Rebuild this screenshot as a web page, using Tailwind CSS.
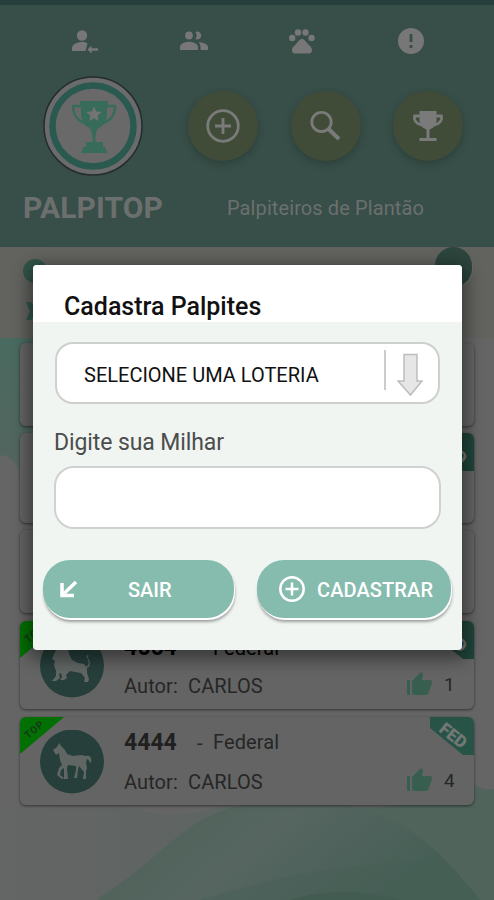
<!DOCTYPE html>
<html lang="pt-BR">
<head>
  <meta charset="UTF-8" />
  <meta name="viewport" content="width=device-width, initial-scale=1.0" />
  <title>Palpitop – Cadastra Palpites</title>
  <script src="https://cdn.jsdelivr.net/npm/@tailwindcss/browser@4"></script>
</head>
<body class="relative w-[494px] h-[900px] overflow-hidden bg-[#656565] font-['Roboto',sans-serif]">

  <!-- Background waves -->
  <svg class="absolute inset-0 w-[494px] h-[900px]" viewBox="0 0 494 900">
    <defs>
      <linearGradient id="side" x1="0" y1="0" x2="0" y2="1">
        <stop offset="0" stop-color="#486a5f" />
        <stop offset="0.2" stop-color="#4c6960" />
        <stop offset="1" stop-color="#53655e" />
      </linearGradient>
      <linearGradient id="hill" x1="0" y1="0" x2="1" y2="0.3">
        <stop offset="0" stop-color="#4c6157" />
        <stop offset="0.5" stop-color="#566560" />
        <stop offset="1" stop-color="#455f55" />
      </linearGradient>
      <linearGradient id="soft" x1="0" y1="0" x2="1" y2="0">
        <stop offset="0" stop-color="#646565" />
        <stop offset="1" stop-color="#56645f" />
      </linearGradient>
    </defs>
    <path d="M0 338H60V478H20C18 462 10 456 0 455Z" fill="url(#side)" />
    <path d="M0 806H130Q170 824 220 806H494V900H0Z" fill="url(#soft)" />
    <path d="M360 808C420 812 440 770 474 784Q486 792 494 789V900H420Z" fill="#50645b" />
    <path d="M98 898C160 862 185 812 250 804H340C405 814 440 850 480 900H98Z" fill="url(#hill)" />
    <path d="M200 900C270 880 330 862 440 862Q465 880 480 900Z" fill="#455f54" opacity="0.4" />
    <path d="M290 900Q340 884 400 900Z" fill="#435c52" />
  </svg>

  <!-- Header -->
  <header class="relative h-[247px] bg-[#384e48] border-t-[5px] border-[#263f3c]">
    <nav class="grid grid-cols-4 pl-[30.5px] pr-[28.5px] pt-[22px] justify-items-center text-[#777777]">
      <svg class="w-7 h-7" viewBox="0 0 28 28" fill="currentColor">
        <circle cx="11" cy="8.500" r="5.200" />
        <path d="M1 24v-3c0-4 6-6 10-6 2.500 0 4 .5 5.500 1.300L14.500 24Z" />
        <path d="M16.500 22.500l4-4v2.800H27v2.400h-6.500v2.800Z" />
      </svg>
      <svg class="w-7 h-7" viewBox="0 0 28 28" fill="currentColor">
        <circle cx="9" cy="8.500" r="3.900" />
        <path d="M15.500 5.100a3.900 3.900 0 1 1 0 6.800 6 6 0 0 0 0-6.800Z" />
        <path d="M0 23v-3c0-3.300 5.500-5.200 9-5.200s9 1.900 9 5.200v3Z" />
        <path d="M18.500 14.900c4 .4 9.500 2 9.500 5.100v3h-7.500v-3c0-2-.8-3.800-2-5.100Z" />
      </svg>
      <svg class="w-7 h-7" viewBox="0 0 28 28" fill="currentColor">
        <circle cx="4.200" cy="11" r="3.200" />
        <circle cx="10" cy="5.500" r="3.200" />
        <circle cx="17.500" cy="5.500" r="3.200" />
        <circle cx="23.500" cy="11" r="3.200" />
        <path d="M14 12c-2 0-3.500 2-5 4-2 2.300-5 4-5 7s2 3.500 4.500 3.500h11c2.500 0 4.500-.5 4.500-3.500s-3-4.700-5-7c-1.500-2-3-4-5-4Z" />
      </svg>
      <svg class="w-7 h-7" viewBox="0 0 28 28">
        <circle cx="14" cy="14" r="13" fill="currentColor" />
        <path d="M14 7v8M14 18v3" stroke="#384e48" stroke-width="2.800" />
      </svg>
    </nav>

    <div class="flex items-center pl-[43px] mt-[21px]">
      <svg class="w-[100px] h-[100px] shrink-0" viewBox="0 0 100 100">
        <circle cx="50" cy="50" r="49" fill="#6b6b6d" stroke="#242d2c" stroke-width="1.500" />
        <circle cx="50" cy="50" r="40.500" fill="#69696a" stroke="#2a5a4f" stroke-width="6.500" />
        <g fill="#386c5a">
          <path d="M37 25h28v4h-1v8c0 8-3 12-8 15-3 2-3.500 6-3.500 14h-3c0-8-.5-12-3.500-14-5-3-8-7-8-15v-8h-1Z" />
          <path d="M43 66h17v5h2l2.500 6H38l2.500-6H43Z" />
        </g>
        <path d="M39 30h-9c0 9 5 16 15 18M63 30h9c0 9-5 16-15 18" fill="none" stroke="#386c5a" stroke-width="2.500" />
        <path d="M51 30.500l2.200 5 5.300.6-4 3.700 1.200 5.200-4.700-2.700-4.700 2.700 1.200-5.200-4-3.700 5.300-.6Z" fill="#747474" />
      </svg>
      <div class="flex gap-[32.500px] ml-[45px] text-[#7a7a7a]">
        <button class="flex items-center justify-center w-[70px] h-[70px] rounded-full bg-[#404c38] shadow-[0_3px_7px_rgba(20,40,35,0.35)]">
          <svg class="w-9 h-9" viewBox="0 0 36 36" fill="none" stroke="currentColor" stroke-width="2.800">
            <circle cx="18" cy="18" r="15.300" />
            <path d="M18 10v16M10 18h16" />
          </svg>
        </button>
        <button class="flex items-center justify-center w-[70px] h-[70px] rounded-full bg-[#404c38] shadow-[0_3px_7px_rgba(20,40,35,0.35)]">
          <svg class="w-9 h-9" viewBox="0 0 36 36" fill="none" stroke="currentColor">
            <circle cx="13.500" cy="14" r="9.700" stroke-width="2.800" />
            <path d="M20 20.500l11 10.500" stroke-width="4" />
          </svg>
        </button>
        <button class="flex items-center justify-center w-[70px] h-[70px] rounded-full bg-[#404c38] shadow-[0_3px_7px_rgba(20,40,35,0.35)]">
          <svg class="w-9 h-9" viewBox="0 0 36 36">
            <path d="M9.500 3h17v9c0 5-2.500 8-7 9.500V30h7v3H9.500v-3h7v-8.500C12 20 9.500 17 9.500 12Z" fill="currentColor" />
            <path d="M10 8H4.500c-1 4 2 8 7 9M26 8h5.500c1 4-2 8-7 9" fill="none" stroke="currentColor" stroke-width="2.800" />
          </svg>
        </button>
      </div>
    </div>

    <div class="flex items-center pl-[23px] mt-[9px]">
      <h1 class="w-[204px] text-[30px] leading-[46px] font-bold text-[#6b706e] tracking-[0.1px]">PALPITOP</h1>
      <p class="text-[20px] leading-[46px] tracking-[0.1px] text-[#6b706e] whitespace-nowrap">Palpiteiros de Plantão</p>
    </div>
  </header>

  <!-- User info, mostly behind the dialog -->
  <section class="relative h-[91px] bg-[#62635f]">
    <span class="absolute left-[23px] top-[12px] w-6 h-6 rounded-full bg-[#33564b]"></span>
    <span class="absolute left-[46px] top-[14px] text-[20px] leading-6 text-[#1c1c1c]">Olá</span>
    <svg class="absolute left-[26px] top-[55px] w-4 h-[18px]" viewBox="0 0 16 18" fill="#33564b"><path d="M0 0h5l8 9-8 9H0l4-9Z" /></svg>
    <span class="absolute left-[435px] top-0 w-[37px] h-[40px] rounded-full bg-[#2c453d] shadow-[1px_1px_1px_#70757380]"></span>
  </section>

  <!-- Guess list -->
  <main class="relative px-5 pt-[5px] text-[#262626]">
    <div class="h-[83px] rounded-md bg-[#646464] shadow-[0_1px_3px_rgba(0,0,0,0.5)]"></div>
    <div class="relative h-[90px] mt-[7px] rounded-md overflow-hidden bg-[#646464] shadow-[0_1px_3px_rgba(0,0,0,0.5)]">
      <svg class="absolute right-0 top-0 w-[44px] h-[38px]" viewBox="0 0 44 38"><path d="M0 0h44v38H33L0 11Z" fill="#1f453a" /><text x="8" y="14" transform="rotate(38 8 14)" font-family="Roboto" font-weight="900" font-size="17" fill="#737875">FED</text></svg>
    </div>
    <div class="h-[83px] mt-[7px] rounded-md bg-[#646464] shadow-[0_1px_3px_rgba(0,0,0,0.5)]"></div>

    <article class="relative flex h-[88px] mt-[8px] rounded-md overflow-hidden bg-[#646464] shadow-[0_1px_3px_rgba(0,0,0,0.5)]">
      <svg class="absolute left-0 top-0 w-[44px] h-[38px]" viewBox="0 0 44 38"><path d="M0 0h44L0 37Z" fill="#027002" /><text x="8" y="22" transform="rotate(-39 8 22)" font-family="Roboto" font-weight="700" font-size="10" fill="#173917" letter-spacing="0.800">TOP</text></svg>
      <svg class="w-16 h-16 ml-5 mt-[13px] shrink-0" viewBox="0 0 64 64">
        <circle cx="32" cy="31.500" r="32" fill="#263f3b" />
        <path d="M14 20l3-6 5-4 6 3 1 7 3 6 6 3 6 1 3 4v5l2 6-1 3h-4l1-4-4-5-6-1-5-1-4 4 1 3-3 2h-4l2-3-1-4-2 1 1 4-4 3h-4l4-5v-5l-2-6 1-4-3-2Z" fill="#606664" />
        <path d="M45 33c5 1 5-5 3-8M47 24l1-3" fill="none" stroke="#606664" stroke-width="1.300" />
      </svg>
      <div class="ml-[20px] pt-[11px]">
        <p class="flex items-baseline leading-8 text-[20px]"><b class="w-[73px] text-[23px] text-black font-bold">4664</b><span class="w-4">-</span><span class="text-black tracking-[0.1px]">Federal</span></p>
        <p class="mt-[6px] text-[20px] leading-8 tracking-[0.1px] whitespace-pre">Autor:  CARLOS</p>
      </div>
      <div class="ml-auto w-[68px] pt-[49px] flex gap-[10px]">
        <svg class="w-7 h-7" viewBox="0 0 28 28" fill="#385e50"><path d="M1 10h3v15H1ZM6 11l9-9 1.500 1.500c.6.6.5 1.500.4 2L16 10h7.500c2 0 3 1.500 2.500 3l-3.500 10c-.5 1.300-1.300 2-2.500 2H8c-1.200 0-2-.8-2-2Z" /></svg>
        <span class="text-[19px] leading-[30px]">1</span>
      </div>
      <svg class="absolute right-0 top-0 w-[44px] h-[38px]" viewBox="0 0 44 38"><path d="M0 0h44v38H33L0 11Z" fill="#1f453a" /><text x="8" y="14" transform="rotate(38 8 14)" font-family="Roboto" font-weight="900" font-size="17" fill="#737875">FED</text></svg>
    </article>

    <article class="relative flex h-[88px] mt-[8px] rounded-md overflow-hidden bg-[#646464] shadow-[0_1px_3px_rgba(0,0,0,0.5)]">
      <svg class="absolute left-0 top-0 w-[44px] h-[38px]" viewBox="0 0 44 38"><path d="M0 0h44L0 37Z" fill="#027002" /><text x="8" y="22" transform="rotate(-39 8 22)" font-family="Roboto" font-weight="700" font-size="10" fill="#173917" letter-spacing="0.800">TOP</text></svg>
      <svg class="w-16 h-16 ml-5 mt-[13px] shrink-0" viewBox="0 0 64 64">
        <circle cx="32" cy="31.500" r="32" fill="#263f3b" />
        <path d="M13 20l4-3 2-4 2 3 4 4 2 4 6 2 8-1 5 1c5-1 6 3 5 7-2-1-2-4-4-4l-1 4 1 5-1 3v8h-3l1-7-5-6-1 4-1 8h-3l2-8v-4l-8-1-1 3 1 11h-4v-11l-3 2-1 5 4 3-2 1-5-4 2-7 3-3-2-5-1-7-3 2Z" fill="#606664" />
      </svg>
      <div class="ml-[20px] pt-[10px]">
        <p class="flex items-baseline leading-8 text-[20px]"><b class="w-[73px] text-[23px] text-[#202020] font-bold">4444</b><span class="w-4">-</span><span class="tracking-[0.1px] -mt-1 relative -top-px">Federal</span></p>
        <p class="mt-[7px] text-[20px] leading-8 tracking-[0.1px] whitespace-pre">Autor:  CARLOS</p>
      </div>
      <div class="ml-auto w-[68px] pt-[49px] flex gap-[10px]">
        <svg class="w-7 h-7" viewBox="0 0 28 28" fill="#385e50"><path d="M1 10h3v15H1ZM6 11l9-9 1.500 1.500c.6.6.5 1.500.4 2L16 10h7.500c2 0 3 1.500 2.500 3l-3.500 10c-.5 1.300-1.300 2-2.500 2H8c-1.200 0-2-.8-2-2Z" /></svg>
        <span class="text-[19px] leading-[30px]">4</span>
      </div>
      <svg class="absolute right-0 top-0 w-[44px] h-[38px]" viewBox="0 0 44 38"><path d="M0 0h44v38H33L0 11Z" fill="#285448" /><text x="8" y="14" transform="rotate(38 8 14)" font-family="Roboto" font-weight="900" font-size="17" fill="#737875">FED</text></svg>
    </article>
  </main>

  <!-- Dialog -->
  <div class="absolute left-[33px] top-[265px] w-[429px] h-[385px] rounded-[4px] overflow-hidden bg-[#f0f5f2] shadow-[0_5px_16px_5px_rgba(0,0,0,0.4)]">
    <h2 class="h-[57px] pl-[31px] pt-[24px] bg-white text-[25px] leading-9 font-medium text-[#111111]">Cadastra Palpites</h2>
    <div class="flex items-center w-[385px] h-[62px] ml-[22px] mt-[20px] pl-[27px] pr-[15px] border-2 border-[#cdd0ce] rounded-[18px] bg-white">
      <span class="pt-[3px] text-[20px] text-[#111111] whitespace-nowrap">SELECIONE UMA LOTERIA</span>
      <span class="ml-auto w-[2px] h-10 -mt-1.5 bg-[#cccccc]"></span>
      <svg class="w-[26px] h-11 ml-[11px] mt-1" viewBox="0 0 26 44"><path d="M7 1.500h13V28h5L13.500 42 1 28h6Z" fill="#e6e6e6" stroke="#bdbdbd" stroke-width="1.500" /></svg>
    </div>
    <label class="block ml-[21px] mt-[22px] text-[23px] leading-[34px] tracking-[-0.1px] text-[#4b4d4c]">Digite sua Milhar</label>
    <input type="text" class="block w-[387px] h-[63px] ml-[21px] mt-[6px] px-5 border-2 border-[#cfd2d0] rounded-[20px] bg-white" />
    <div class="flex gap-[23px] pl-[10px] mt-[31px] text-white text-[20px] font-medium">
      <button class="flex items-center w-[191px] h-[58px] pl-[15px] rounded-[27px] bg-[#86bcae] shadow-[1px_2px_0_white,1px_4px_3px_rgba(0,0,0,0.35)]">
        <svg class="w-[20px] h-[20px]" viewBox="0 0 20 20" fill="none" stroke="currentColor" stroke-width="3.500"><path d="M18 3L6 14.500M4 4v12.500H16" /></svg>
        <span class="ml-[50px] pt-[2px]">SAIR</span>
      </button>
      <button class="flex items-center w-[194px] h-[58px] pl-[21px] rounded-[27px] bg-[#86bcae] shadow-[1px_2px_0_white,1px_4px_3px_rgba(0,0,0,0.35)]">
        <svg class="w-7 h-7" viewBox="0 0 28 28" fill="none" stroke="currentColor" stroke-width="2.500"><circle cx="14" cy="14" r="11.700" /><path d="M14 7.500v13M7.500 14h13" /></svg>
        <span class="ml-[11px] pt-[2px] tracking-[0.1px]">CADASTRAR</span>
      </button>
    </div>
  </div>
</body>
</html>
